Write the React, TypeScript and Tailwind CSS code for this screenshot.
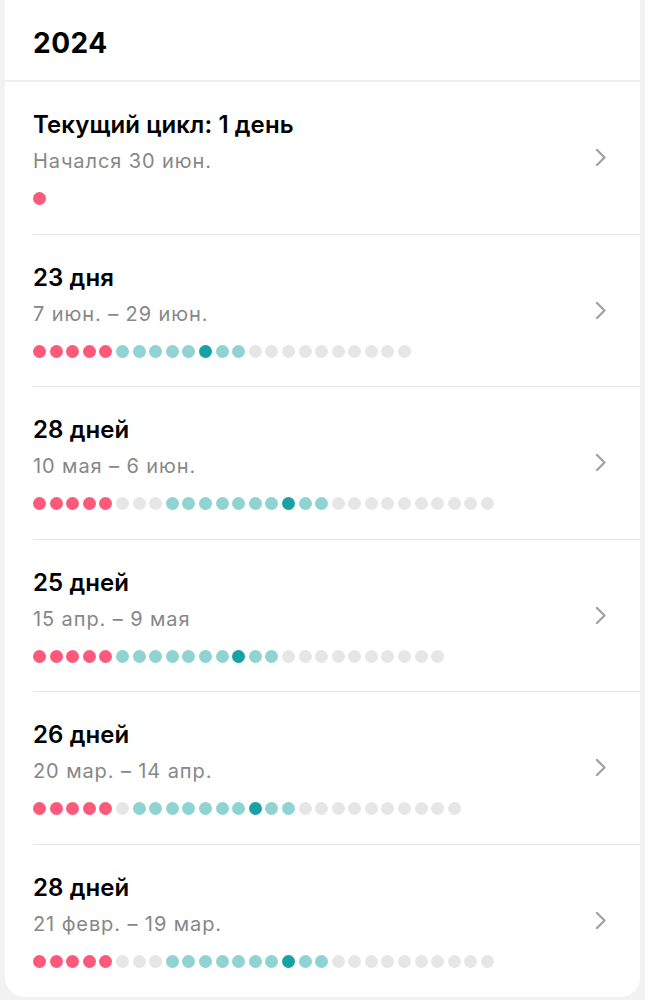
type Cycle = {
  title: string;
  range: string;
  dots: string;
};

// p = period, g = gray, t = fertile, o = ovulation
const cycles: Cycle[] = [
  { title: "Текущий цикл: 1 день", range: "Начался 30 июн.", dots: "p" },
  { title: "23 дня", range: "7 июн. – 29 июн.", dots: "ppppptttttottgggggggggg" },
  { title: "28 дней", range: "10 мая – 6 июн.", dots: "pppppgggtttttttottgggggggggg" },
  { title: "25 дней", range: "15 апр. – 9 мая", dots: "ppppptttttttottgggggggggg" },
  { title: "26 дней", range: "20 мар. – 14 апр.", dots: "pppppgtttttttottgggggggggg" },
  { title: "28 дней", range: "21 февр. – 19 мар.", dots: "pppppgggtttttttottgggggggggg" },
];

const dotColor: Record<string, string> = {
  p: "bg-[#fd5a7b]",
  t: "bg-[#8fd3d3]",
  o: "bg-[#19a2a5]",
  g: "bg-[#e6e6e6]",
};

function Chevron() {
  return (
    <svg width="12" height="19" viewBox="0 0 12 19" fill="none">
      <path d="M2 2l7.5 7.5L2 17" stroke="#a3a3a3" strokeWidth="2.4" strokeLinecap="round" strokeLinejoin="round" />
    </svg>
  );
}

function CycleRow({ cycle, last }: { cycle: Cycle; last: boolean }) {
  return (
    <div className="pl-[28px]">
      <div
        className={
          "flex items-center justify-between pr-[33px] " +
          (last ? "h-[152px]" : "h-[152.5px] border-b border-[#e6e6e6]")
        }
      >
        <div>
          <div className="text-[24px] leading-[30px] font-semibold text-black tracking-[0.1px]">{cycle.title}</div>
          <div className="mt-[9px] text-[20px] leading-[24px] text-[#878787] tracking-[0.9px]">{cycle.range}</div>
          <div className="mt-[19px] flex gap-[3.6px]">
            {cycle.dots.split("").map((d, i) => (
              <span key={i} className={"block w-[13px] h-[13px] rounded-full " + dotColor[d]} />
            ))}
          </div>
        </div>
        <Chevron />
      </div>
    </div>
  );
}

export default function App() {
  return (
    <div className="min-h-[1000px] bg-[#f2f2f2] px-[5px] pb-[5px] font-['Inter',sans-serif]">
      <div className="bg-white rounded-b-[20px]">
        <div className="h-[82px] pl-[28px] flex items-center border-b-2 border-[#efefef]">
          <span className="text-[28px] font-bold text-black pt-[6px] tracking-[0.5px]">2024</span>
        </div>
        {cycles.map((c, i) => (
          <CycleRow key={i} cycle={c} last={i === cycles.length - 1} />
        ))}
      </div>
    </div>
  );
}
